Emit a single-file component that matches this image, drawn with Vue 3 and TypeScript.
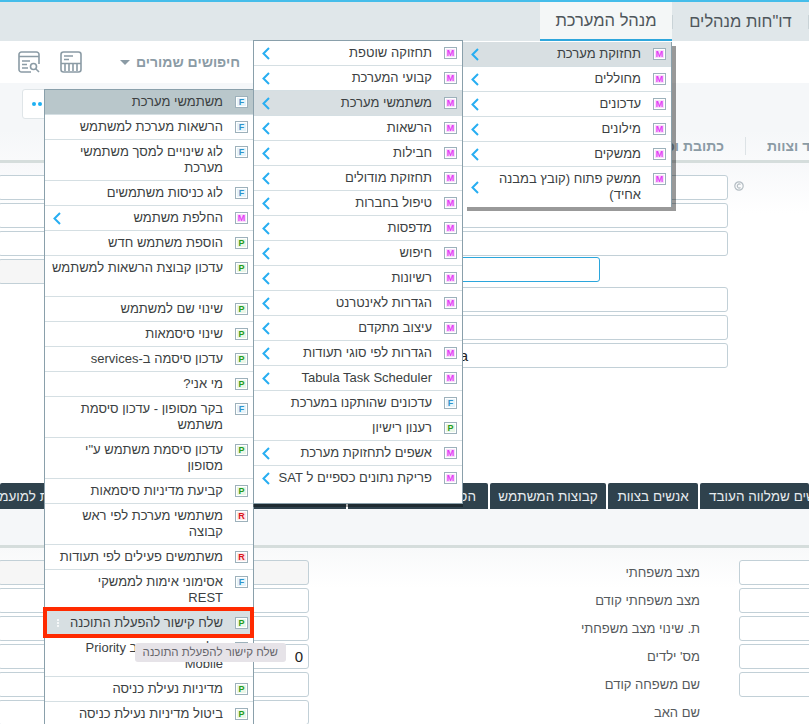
<script setup lang="ts">
type Kind = 'M' | 'F' | 'P' | 'R'
interface Item {
  text: string
  kind: Kind
  arrow?: boolean
  active?: boolean
  strong?: boolean
  extra?: number
  hover?: boolean
}

const m = (text: string): Item => ({ text, kind: 'M', arrow: true })

const menuOne: Item[] = [
  { text: 'תחזוקת מערכת', kind: 'M', arrow: true, active: true },
  m('מחוללים'),
  m('עדכונים'),
  m('מילונים'),
  m('ממשקים'),
  m('ממשק פתוח (קובץ במבנה\nאחיד)'),
]

const menuTwo: Item[] = [
  m('תחזוקה שוטפת'),
  m('קבועי המערכת'),
  { text: 'משתמשי מערכת', kind: 'M', arrow: true, active: true },
  m('הרשאות'),
  m('חבילות'),
  m('תחזוקת מודולים'),
  m('טיפול בחברות'),
  m('מדפסות'),
  m('חיפוש'),
  m('רשיונות'),
  m('הגדרות לאינטרנט'),
  m('עיצוב מתקדם'),
  m('הגדרות לפי סוגי תעודות'),
  m('Tabula Task Scheduler'),
  { text: 'עדכונים שהותקנו במערכת', kind: 'F' },
  { text: 'רענון רישיון', kind: 'P' },
  m('אשפים לתחזוקת מערכת'),
  { text: 'פריקת נתונים כספיים ל SAT', kind: 'M', arrow: true, extra: 13 },
]

const menuThree: Item[] = [
  { text: 'משתמשי מערכת', kind: 'F', strong: true },
  { text: 'הרשאות מערכת למשתמש', kind: 'F' },
  { text: 'לוג שינויים למסך משתמשי\nמערכת', kind: 'F' },
  { text: 'לוג כניסות משתמשים', kind: 'F' },
  m('החלפת משתמש'),
  { text: 'הוספת משתמש חדש', kind: 'P' },
  { text: 'עדכון קבוצת הרשאות למשתמש', kind: 'P', extra: 16 },
  { text: 'שינוי שם למשתמש', kind: 'P' },
  { text: 'שינוי סיסמאות', kind: 'P' },
  { text: 'עדכון סיסמה ב-services', kind: 'P' },
  { text: 'מי אני?', kind: 'P' },
  { text: 'בקר מסופון - עדכון סיסמת\nמשתמש', kind: 'F' },
  { text: 'עדכון סיסמת משתמש ע"י\nמסופון', kind: 'P' },
  { text: 'קביעת מדיניות סיסמאות', kind: 'P' },
  { text: 'משתמשי מערכת לפי ראש\nקבוצה', kind: 'R' },
  { text: 'משתמשים פעילים לפי תעודות', kind: 'R' },
  { text: 'אסימוני אימות לממשקי\nREST', kind: 'F' },
  { text: 'שלח קישור להפעלת התוכנה', kind: 'P', hover: true },
  { text: 'שליחת קוד QR ב Priority\nMobile', kind: 'P' },
  { text: 'מדיניות נעילת כניסה', kind: 'P' },
  { text: 'ביטול מדיניות נעילת כניסה', kind: 'P' },
]

const menus = [
  { id: 'three', items: menuThree },
  { id: 'two', items: menuTwo },
  { id: 'one', items: menuOne },
]

const labels = [
  'מצב משפחתי',
  'מצב משפחתי קודם',
  'ת. שינוי מצב משפחתי',
  "מס' ילדים",
  'שם משפחה קודם',
  'שם האב',
]
</script>

<template>
  <div class="page">
    <div class="topline"></div>

    <header class="main-tabs" dir="rtl">
      <span class="main-sep"></span>
      <div class="main-tab">דו"חות מנהלים</div>
      <span class="main-sep"></span>
      <div class="main-tab current">מנהל המערכת</div>
    </header>

    <div class="toolbar" dir="rtl">
      <span class="saved">חיפושים שמורים</span>
      <span class="caret"></span>
      <span class="tool-sep"></span>
      <svg class="tool" viewBox="0 0 22 22" fill="none" stroke="#8b9ba5" stroke-width="1.6">
        <rect x="1" y="1" width="20" height="20" rx="2.5" />
        <path d="M4 5h9M4 8.500h5M1 12.500h20M5 13v7M9 13v7M13 13v7M17 13v7" />
      </svg>
      <svg class="tool" viewBox="0 0 22 22" fill="none" stroke="#8b9ba5" stroke-width="1.6">
        <path d="M13 21H3.500A2.500 2.500 0 0 1 1 18.500V3.500A2.500 2.500 0 0 1 3.500 1h15A2.500 2.500 0 0 1 21 3.500V13" />
        <path d="M1 5.500h20M4 10h8M4 13.500h5M4 17h6" />
        <circle cx="15.500" cy="15.500" r="3" />
        <path d="M17.700 17.700 21 21" />
      </svg>
    </div>

    <div class="strip">
      <div class="card">
        <i></i><i></i><i></i>
      </div>
    </div>

    <div class="sub-tabs" dir="rtl">
      <div class="sub-tab first"><span>תפקיד וצוות</span></div>
      <span class="sub-sep"></span>
      <div class="sub-tab">כתובת וכו'</div>
    </div>

    <section class="form-top">
      <div class="line with-icon">
        <div class="field"></div>
        <svg class="clock" viewBox="0 0 10 10" fill="none" stroke="#b4bdc3" stroke-width="1.200">
          <circle cx="5" cy="5" r="4.200" />
          <path d="M6.500 3.400A2 2 0 1 0 6.500 6.600" />
        </svg>
      </div>
      <div class="line"><div class="field"></div></div>
      <div class="line"><div class="field"></div></div>
      <div class="line split">
        <div class="field grey"></div>
        <div class="field focus"></div>
      </div>
      <div class="line inset"><div class="field"></div></div>
      <div class="line inset"><div class="field"></div></div>
      <div class="line inset"><div class="field value-a">Tabula</div></div>
    </section>

    <nav class="dark-tabs" dir="rtl">
      <div class="dark-tab t1"><span>אנשים שמלווה העובד</span></div>
      <div class="dark-tab t2">אנשים בצוות</div>
      <div class="dark-tab t3">קבוצות המשתמש</div>
      <div class="dark-tab t4">הסכמים</div>
      <div class="dark-tab t5">הודעות למועמדים</div>
    </nav>
    <div class="dark-under"></div>

    <section class="form-bottom">
      <div v-for="(label, i) in labels" :key="label" class="form-row">
        <div class="field" :class="{ grey: i === 0, zero: i === 3 }">{{ i === 3 ? '0' : '' }}</div>
        <div class="label" dir="rtl">{{ label }}</div>
        <div v-if="i < 5" class="field side"></div>
      </div>
    </section>

    <div
      v-for="menu in menus"
      :key="menu.id"
      class="menu"
      :class="menu.id"
      dir="rtl"
    >
      <div
        v-for="item in menu.items"
        :key="item.text"
        class="row"
        :class="{ active: item.active, strong: item.strong, hover: item.hover }"
        :style="item.extra ? { paddingBottom: 4 + item.extra + 'px' } : undefined"
      >
        <span class="badge" :class="item.kind.toLowerCase()"><b>{{ item.kind }}</b></span>
        <span class="text">{{ item.text }}</span>
        <span v-if="item.hover" class="grip"><i></i><i></i><i></i></span>
        <svg v-if="item.arrow" class="chev" viewBox="0 0 8 13" fill="none" stroke="#27aef2" stroke-width="2">
          <path d="M7 1 1.500 6.500 7 12" />
        </svg>
      </div>
    </div>

    <div class="highlight"></div>
    <div class="tooltip" dir="rtl">שלח קישור להפעלת התוכנה</div>
  </div>
</template>

<style scoped>
.page {
  position: relative;
  width: 809px;
  height: 724px;
  overflow: hidden;
  background: #fff;
  font-family: "Liberation Sans", Arial, sans-serif;
  color: #3b3f42;
}

.topline {
  height: 2px;
  background: #45bdea;
}

.main-tabs {
  display: flex;
  align-items: center;
  height: 39px;
  background: #e0e7ea;
}

.main-sep {
  width: 1px;
  height: 14px;
  background: #c9d3d7;
}

.main-tab {
  width: 135px;
  box-sizing: border-box;
  text-align: center;
  font-size: 16.5px;
  color: #4e565b;
}

.main-tab.current {
  display: flex;
  align-items: center;
  align-self: stretch;
  width: 132px;
  justify-content: center;
  background: #f4f7f7;
  border-bottom: 2px solid #2fa7dc;
}

.toolbar {
  display: flex;
  align-items: center;
  height: 42px;
  padding-right: 569px;
  box-sizing: border-box;
  width: 809px;
  background: #fff;
}

.saved {
  font-size: 14px;
  font-weight: 700;
  color: #8b9ba5;
  white-space: nowrap;
}

.caret {
  margin-right: 6px;
  border-top: 5px solid #8b9ba5;
  border-left: 5px solid transparent;
  border-right: 5px solid transparent;
}

.tool-sep {
  width: 1px;
  height: 21px;
  margin: 0 18px 0 20px;
  background: #d5dbdf;
}

.tool {
  width: 22px;
  height: 22px;
  margin-left: 20px;
  flex: none;
}

.strip {
  height: 47px;
  box-sizing: border-box;
  padding: 6px 0 0 22px;
  background: #f5f7f9;
}

.card {
  display: flex;
  align-items: center;
  gap: 2px;
  width: 220px;
  height: 30px;
  box-sizing: border-box;
  padding-left: 9px;
  background: #fff;
  border: 1px solid #dfe5e8;
  border-radius: 3px;
}

.card i {
  width: 4px;
  height: 4px;
  border-radius: 50%;
  background: #1db0f2;
}

.sub-tabs {
  display: flex;
  align-items: center;
  height: 33px;
  box-sizing: border-box;
  padding-top: 2px;
  background: linear-gradient(#f5f7f9, #f9fafb);
  border-bottom: 3px solid #d5dddc;
  font-size: 14px;
  font-weight: 700;
  color: #8b9ba5;
}

.sub-tab {
  white-space: nowrap;
}

.sub-tab.first {
  display: flex;
  justify-content: flex-end;
  width: 42px;
  overflow: hidden;
}

.sub-sep {
  width: 1px;
  height: 18px;
  margin: 0 21px 0 21px;
  background: #dde3e6;
}

.form-top {
  height: 320px;
  box-sizing: border-box;
  padding-top: 12px;
  background: linear-gradient(#f7f8fa, #fff 50px);
}

.line {
  display: flex;
  align-items: flex-start;
  height: 25px;
  margin-bottom: 3px;
  padding-right: 81px;
}

.line.with-icon {
  padding-right: 65px;
}

.line.inset {
  padding-left: 300px;
}

.line.split {
  padding-right: 209px;
  gap: 100px;
}

.field {
  flex: 1;
  height: 25px;
  box-sizing: border-box;
  background: #fff;
  border: 1px solid #c2d0d7;
  border-radius: 3px;
}

.line > .field:first-child {
  margin-left: -2px;
}

.line.inset > .field:first-child {
  margin-left: 0;
}

.field.grey {
  background: #f6f6f6;
}

.split .field.grey {
  flex: 0 0 200px;
}

.field.focus {
  height: 25px;
  margin-top: -2px;
  border-color: #2ba6dc;
}

.value-a {
  padding-left: 123px;
  font-size: 15px;
  line-height: 24px;
  color: #222;
}

.clock {
  width: 10px;
  height: 10px;
  margin: 6px 0 0 6px;
  flex: none;
}

.dark-tabs {
  display: flex;
  gap: 2px;
  height: 26px;
  font-size: 13.5px;
  color: #e7ecef;
}

.dark-tab {
  display: flex;
  align-items: center;
  justify-content: center;
  flex: none;
  box-sizing: border-box;
  background: #2f424d;
  border-radius: 2px 2px 0 0;
  white-space: nowrap;
  overflow: hidden;
}

.t1 {
  width: 109px;
  justify-content: flex-end;
  padding-left: 9px;
}

.t2 {
  width: 90px;
}

.t3 {
  width: 116px;
}

.t4 {
  width: 140px;
  justify-content: flex-start;
  padding-right: 12px;
}

.t5 {
  width: 346px;
  justify-content: flex-start;
  padding-right: 266px;
}

.dark-under {
  height: 39px;
  box-sizing: border-box;
  background: #f5f7f9;
  border-bottom: 3px solid #d5dddc;
}

.form-bottom {
  display: grid;
  grid-auto-rows: 25px;
  row-gap: 3px;
  padding-top: 12px;
  background: linear-gradient(#f8f9fa, #fff 40px);
}

.form-row {
  display: grid;
  grid-template-columns: 311px 391px 70px;
  column-gap: 0;
  margin-left: -2px;
  align-items: center;
}

.form-row .field {
  width: 100%;
}

.form-row .side {
  margin-left: 39px;
  width: 90px;
}

.form-row .zero {
  padding-right: 5px;
  text-align: right;
  font-size: 15px;
  line-height: 24px;
  color: #222;
}

.label {
  font-size: 13px;
  color: #55595c;
}

.menu {
  position: absolute;
  box-sizing: border-box;
  background: #fff;
}

.menu.three {
  left: 44px;
  top: 89px;
  width: 210px;
  border: 1px solid #8aa0ab;
  border-bottom: 0;
}

.menu.two {
  left: 253px;
  top: 40px;
  width: 210px;
  border: 1px solid #8aa0ab;
  box-shadow: 0 3px 0 rgba(0, 0, 0, 0.35);
}

.menu.one {
  left: 463px;
  top: 42px;
  width: 209px;
  border-right: 1px solid #8aa0ab;
  box-shadow: 4px 4px 0 rgba(0, 0, 0, 0.4);
}

.row {
  position: relative;
  display: flex;
  align-items: flex-start;
  padding: 4px 5px 4px 8px;
  border-bottom: 1px solid #d5dfe3;
  font-size: 13px;
  line-height: 16px;
}

.row:last-child {
  border-bottom: 0;
}

.row.active {
  background: #d8dfe2;
}

.row.strong {
  background: #b9c7cb;
}

.row.hover {
  background: #d7dfe2;
}

.badge {
  flex: none;
  display: flex;
  align-items: center;
  justify-content: center;
  width: 13px;
  height: 12px;
  margin: 2px 0 0 12px;
  box-sizing: border-box;
  padding: 1px;
  background: #fff;
  border: 1px solid #9db1bb;
}

.badge b {
  display: block;
  width: 100%;
  height: 100%;
  font-size: 9px;
  line-height: 9px;
  text-align: center;
}

.badge.m b {
  color: #e33df5;
  background: #f8dcfb;
}

.badge.f b {
  color: #2f93cb;
  background: #e6f3fa;
}

.badge.p b {
  color: #259a1c;
  background: #eaf7e7;
}

.badge.r b {
  color: #d9161c;
  background: #fde8e8;
}

.text {
  white-space: pre;
}

.chev {
  flex: none;
  align-self: center;
  width: 8px;
  height: 13px;
  margin-right: auto;
}

.grip {
  display: flex;
  flex-direction: column;
  gap: 1px;
  align-self: center;
  margin-right: auto;
  margin-left: 4px;
}

.grip i {
  width: 2px;
  height: 2px;
  border-radius: 50%;
  background: #fff;
}

.highlight {
  position: absolute;
  left: 43px;
  top: 607px;
  width: 211px;
  height: 31px;
  box-sizing: border-box;
  border: 4px solid #ff2a00;
}

.tooltip {
  position: absolute;
  left: 135px;
  top: 643px;
  width: 151px;
  height: 19px;
  box-sizing: border-box;
  padding-right: 8px;
  background: #e6e3e8;
  border-radius: 3px;
  font-size: 11.5px;
  line-height: 19px;
  color: #66666c;
  white-space: nowrap;
}
</style>
